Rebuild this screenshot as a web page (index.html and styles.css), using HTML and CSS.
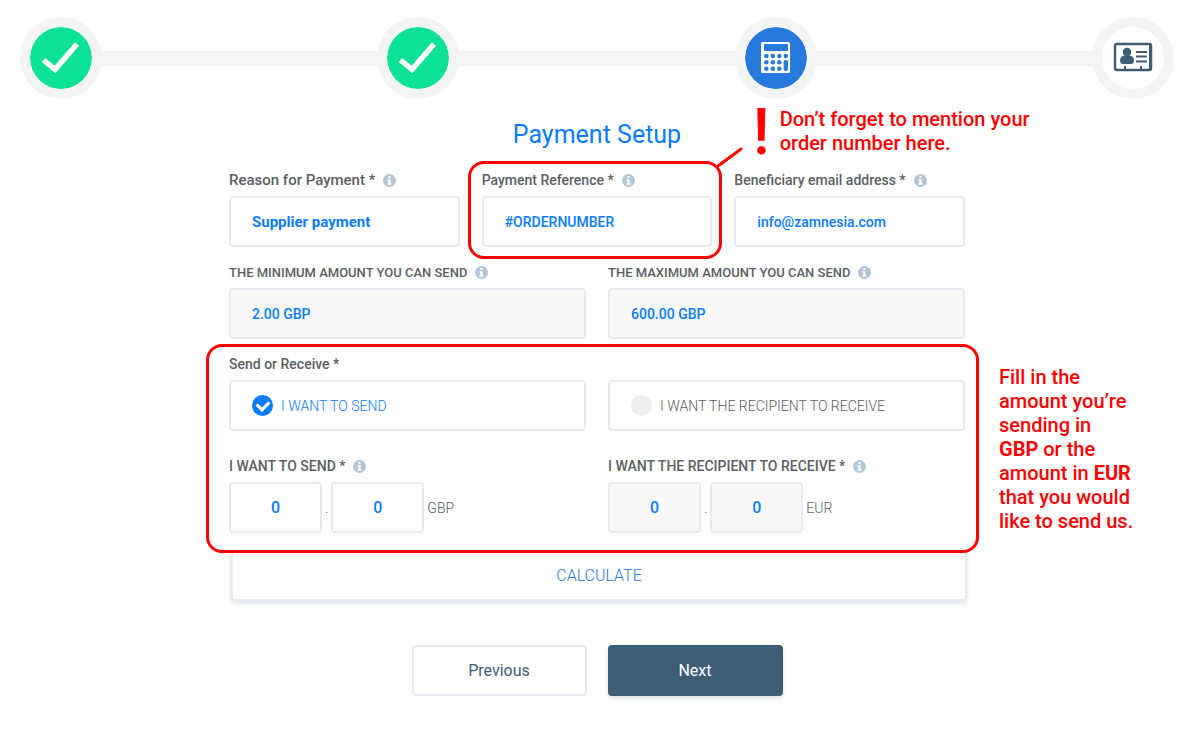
FILE: index.html
```html
<!DOCTYPE html>
<html lang="en">
<head>
  <meta charset="UTF-8">
  <meta name="viewport" content="width=device-width, initial-scale=1">
  <title>Payment Setup</title>
  <link rel="stylesheet" href="styles.css">
</head>
<body>

<!-- shared icons -->
<svg class="sprite" aria-hidden="true">
  <symbol id="icon-info" viewBox="0 0 12 12">
    <circle cx="6" cy="6" r="6" fill="#b3c6d6"/>
    <path d="M5 1.8h2v1.9H5zM4.2 4.8H7v3.7h.9V10H4.1V8.500H5V6.200h-.8z" fill="#fff"/>
  </symbol>
  <symbol id="icon-check" viewBox="0 0 62 62">
    <path d="M13.500 33 25 42.500 47 17" fill="none" stroke="#fff" stroke-width="5.500"/>
  </symbol>
</svg>

<main class="page">

  <ol class="steps">
    <li class="step done"><svg width="62" height="62"><use href="#icon-check"/></svg></li>
    <li class="step done"><svg width="62" height="62"><use href="#icon-check"/></svg></li>
    <li class="step current">
      <svg width="62" height="62" viewBox="0 0 62 62">
        <rect x="16" y="15" width="29" height="31" rx="1.500" fill="#fff"/>
        <g fill="#2879dc">
          <rect x="19" y="17" width="24" height="7" rx="1"/>
          <circle cx="21.300" cy="29" r="2.200"/><circle cx="27.800" cy="29" r="2.200"/><circle cx="34.300" cy="29" r="2.200"/><circle cx="40.800" cy="29" r="2.200"/>
          <circle cx="21.300" cy="35.300" r="2.200"/><circle cx="27.800" cy="35.300" r="2.200"/><circle cx="34.300" cy="35.300" r="2.200"/>
          <circle cx="21.300" cy="41.700" r="2.200"/><circle cx="27.800" cy="41.700" r="2.200"/><circle cx="34.300" cy="41.700" r="2.200"/>
          <rect x="38.600" y="33" width="4.400" height="11" rx="2"/>
        </g>
      </svg>
    </li>
    <li class="step">
      <svg width="62" height="62" viewBox="0 0 62 62">
        <rect x="13" y="17" width="36" height="26" rx="2" fill="none" stroke="#3f5e75" stroke-width="2.500"/>
        <g fill="#3f5e75">
          <path d="M47 17h3v26h-3z"/>
          <path d="M22 39h2v4h-2zM38 39h2v4h-2z"/>
          <circle cx="25" cy="25" r="4.300"/>
          <path d="M22 28.500h6c2.500.6 4 2.300 4 5.200 0 2-1 3.300-3 3.300h-8c-2 0-3-1.300-3-3.300 0-2.900 1.500-4.600 4-5.200z"/>
          <path d="M34 24h11v2H34zM34 28.500h11v2H34zM34 33.500h11v2H34z"/>
        </g>
      </svg>
    </li>
  </ol>

  <form class="payment">
    <h1>Payment Setup</h1>

    <div class="row three">
      <div class="field large">
        <label for="reason">Reason for Payment * <svg class="info"><use href="#icon-info"/></svg></label>
        <input type="text" id="reason" value="Supplier payment">
      </div>
      <div class="field marked mark-ref">
        <label for="reference">Payment Reference * <svg class="info"><use href="#icon-info"/></svg></label>
        <input type="text" id="reference" value="#ORDERNUMBER">
        <svg class="pointer" width="28" height="22" viewBox="0 0 28 22"><path d="M2 20 25 3" stroke="#f00" stroke-width="3" stroke-linecap="round"/></svg>
        <span class="bang">!</span>
        <p class="note note-ref">Don’t forget to mention your order number here.</p>
      </div>
      <div class="field">
        <label for="email">Beneficiary email address * <svg class="info"><use href="#icon-info"/></svg></label>
        <input type="email" id="email" value="info@zamnesia.com">
      </div>
    </div>

    <div class="row two limits">
      <div class="field">
        <label for="min">THE MINIMUM AMOUNT YOU CAN SEND <svg class="info"><use href="#icon-info"/></svg></label>
        <input type="text" id="min" value="2.00 GBP" readonly>
      </div>
      <div class="field">
        <label for="max">THE MAXIMUM AMOUNT YOU CAN SEND <svg class="info"><use href="#icon-info"/></svg></label>
        <input type="text" id="max" value="600.00 GBP" readonly>
      </div>
    </div>

    <div class="marked mark-amount">
      <div class="field" role="radiogroup" aria-labelledby="direction">
        <span class="caption" id="direction">Send or Receive *</span>
        <div class="two">
          <label class="choice"><input type="radio" name="direction" value="send" checked> I WANT TO SEND</label>
          <label class="choice"><input type="radio" name="direction" value="receive"> I WANT THE RECIPIENT TO RECEIVE</label>
        </div>
      </div>

      <div class="two amounts">
        <div class="field">
          <label for="send">I WANT TO SEND * <svg class="info"><use href="#icon-info"/></svg></label>
          <div class="money">
            <input type="text" id="send" value="0"><span>.</span><input type="text" value="0" aria-label="Pence to send"><span>GBP</span>
          </div>
        </div>
        <div class="field">
          <label for="receive">I WANT THE RECIPIENT TO RECEIVE * <svg class="info"><use href="#icon-info"/></svg></label>
          <div class="money">
            <input type="text" id="receive" value="0" readonly><span>.</span><input type="text" value="0" aria-label="Cents to receive" readonly><span>EUR</span>
          </div>
        </div>
      </div>
      <p class="note note-amount">Fill in the amount you’re sending in <b>GBP</b> or the amount in <b>EUR</b> that you would like to send us.</p>
    </div>

    <button class="calculate" type="button">CALCULATE</button>

    <div class="actions">
      <button class="previous" type="button">Previous</button>
      <button class="next" type="submit">Next</button>
    </div>
  </form>

</main>

</body>
</html>
```
FILE: styles.css
```css
* {
  box-sizing: border-box;
}

body {
  margin: 0;
  background: #fff;
  color: #5c6064;
  font-family: Roboto, "Liberation Sans", sans-serif;
  font-size: 14px;
}

.sprite {
  display: none;
}

.page {
  padding: 17px 26px 39px 20px;
}

/* steps */
.steps {
  display: flex;
  justify-content: space-between;
  margin: 0;
  padding: 0;
  list-style: none;
  background: linear-gradient(#f3f5f5, #f3f5f5) center / 96% 15px no-repeat;
}

.step {
  width: 82px;
  height: 82px;
  border: 10px solid #f3f5f5;
  border-radius: 50%;
  background: #fff;
}

.step svg {
  display: block;
}

.done {
  background: #0be295;
  background-clip: padding-box;
}

.current {
  background: #2879dc;
  background-clip: padding-box;
}

/* form */
.payment {
  max-width: 736px;
  margin: 0 auto;
}

h1 {
  margin: 20px 0 20px;
  color: #0a7cff;
  font-size: 25px;
  font-weight: 400;
  line-height: 32px;
  text-align: center;
}

.row {
  margin-bottom: 16px;
}

.two, .three {
  display: grid;
  grid-template-columns: repeat(2, 1fr);
  gap: 22px;
}

.three {
  grid-template-columns: repeat(3, 1fr);
}

.field > label, .caption {
  display: flex;
  align-items: center;
  gap: 8px;
  height: 18px;
  margin-bottom: 7px;
  font-weight: 500;
  white-space: nowrap;
}

.limits label {
  font-size: 13px;
}

.info {
  width: 13px;
  height: 13px;
}

input[type="text"], input[type="email"], .choice {
  width: 100%;
  height: 51px;
  padding: 0 21px;
  border: 2px solid #e6ecf1;
  border-radius: 4px;
  background: #fff;
}

input[type="text"], input[type="email"] {
  color: #0a7cff;
  font: 500 14px Roboto, sans-serif;
}

.large label {
  font-size: 15px;
}

.large input[type="text"] {
  font-size: 15px;
  font-weight: 700;
}

input[readonly] {
  background: #f9f9f9;
}

.choice {
  display: flex;
  align-items: center;
  gap: 8px;
  font-weight: 300;
}

.choice:has(:checked) {
  color: #0a7cff;
}

input[type="radio"] {
  appearance: none;
  width: 21px;
  height: 21px;
  margin: 0;
  border-radius: 50%;
  background: #eee;
}

input[type="radio"]:checked {
  display: grid;
  place-items: center;
  background: #0a7cff;
}

input[type="radio"]:checked::after {
  content: "";
  width: 9px;
  height: 6px;
  margin-bottom: 2px;
  border: solid #fff;
  border-width: 0 0 3px 3px;
  rotate: -45deg;
}

.amounts {
  margin-top: 26px;
}

.money {
  display: flex;
  align-items: center;
  gap: 3px;
  font-weight: 300;
}

.money input[type="text"] {
  width: 93px;
  font-size: 16px;
  text-align: center;
}

/* red marks and notes over the form */
.marked {
  position: relative;
}

.marked::before {
  content: "";
  position: absolute;
  z-index: 1;
  border: 3px solid #f00;
  border-radius: 16px;
  pointer-events: none;
}

.mark-ref::before {
  inset: -10px -10px -12px -14px;
}

.mark-amount::before {
  inset: -11px -14px -20px -23px;
}

.pointer, .bang, .note {
  position: absolute;
  color: #f00;
}

.pointer {
  left: 234px;
  top: -25px;
}

.bang {
  left: 271px;
  top: -70px;
  font-size: 64px;
  font-weight: 500;
  line-height: 64px;
}

.note {
  margin: 0;
  font-size: 20px;
  font-weight: 500;
  line-height: 24px;
}

.note-ref {
  left: 298px;
  top: -64px;
  width: 260px;
}

.note-amount {
  left: 770px;
  top: 10px;
  width: 135px;
}

/* buttons */
button {
  height: 51px;
  border: 2px solid #e6ecf1;
  border-radius: 4px;
  background: #fff;
  color: #3f5e75;
  font: 400 16px Roboto, sans-serif;
}

.calculate {
  display: block;
  position: relative;
  left: 2px;
  width: 100%;
  margin-top: 17px;
  box-shadow: 0 2px 4px rgba(63, 94, 117, 0.2);
  color: #2879dc;
  font-weight: 300;
}

.actions {
  display: flex;
  justify-content: center;
  gap: 21px;
  margin-top: 44px;
}

.actions button {
  width: 175px;
}

.actions .next {
  border-color: #3f5e75;
  background: #3f5e75;
  box-shadow: 0 2px 4px rgba(63, 94, 117, 0.2);
  color: #fff;
}
```
